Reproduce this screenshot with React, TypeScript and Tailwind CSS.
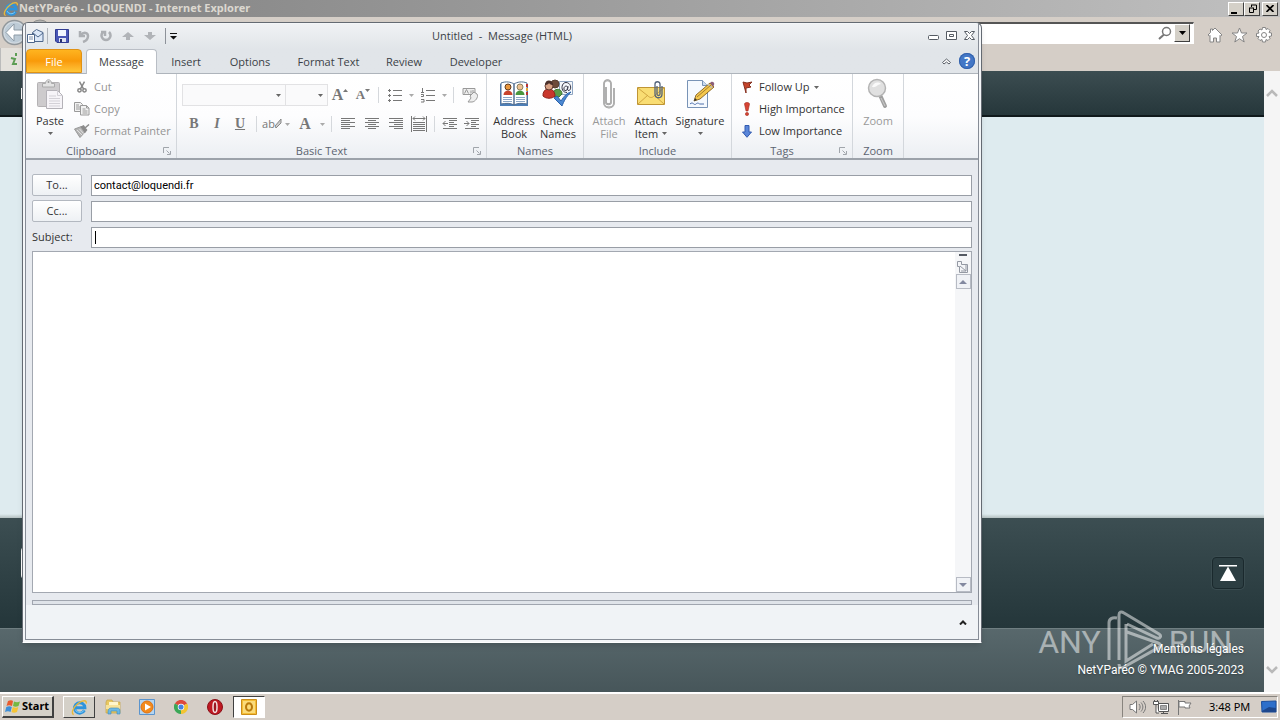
import { useId } from "react";
import type { ReactNode } from "react";

function Arrow({ className = "fill-[#666]" }: { className?: string }) {
  return (
    <svg width="5" height="3" viewBox="0 0 5 3" className={className} aria-hidden="true">
      <path d="M0 0h5L2.500 3z" />
    </svg>
  );
}

function IeLogo({ size }: { size: number }) {
  return (
    <svg width={size} height={size} viewBox="0 0 16 16" fill="none" aria-hidden="true">
      <path d="M12.600 10.600a4.900 4.900 0 1 1 .5-2.400H4" stroke="#2f94dc" strokeWidth="2.800" />
      <path d="M12 10.800A4.600 4.600 0 0 1 4 10" stroke="#7cc8f3" strokeWidth="1" />
      <path d="M2.600 14.600C-.6 13.600 2.500 7.400 7 4c4-3 8.200-3.300 7.300.3" stroke="#e9b93a" strokeWidth="1.300" />
    </svg>
  );
}

function Launcher() {
  return (
    <svg width="9" height="9" viewBox="0 0 9 9" fill="none" stroke="#a0a5ab" aria-hidden="true">
      <path d="M.5 6V.5H6M3.500 3.500l3 3M7.500 4v3.500H4" />
    </svg>
  );
}

function Group({
  label,
  width,
  launcher,
  children,
}: {
  label: string;
  width: string;
  launcher?: boolean;
  children: ReactNode;
}) {
  return (
    <section
      aria-label={label}
      className={`relative flex shrink-0 flex-col border-r border-[#d3d7dc] ${width}`}
    >
      <div className="h-[70px]">{children}</div>
      <p className={`text-center leading-[14px] text-[#5c6470] ${launcher ? "pr-5" : ""}`}>{label}</p>
      {launcher && (
        <button aria-label={`${label} options`} className="absolute right-1 bottom-[2px]">
          <Launcher />
        </button>
      )}
    </section>
  );
}

function BigButton({
  icon,
  lines,
  width,
  arrow,
  muted,
}: {
  icon: ReactNode;
  lines: string[];
  width: string;
  arrow?: boolean;
  muted?: boolean;
}) {
  return (
    <button
      className={`flex shrink-0 flex-col items-center pt-1 leading-[13px] whitespace-nowrap ${width} ${
        muted ? "text-[#999]" : "text-[#333]"
      }`}
    >
      <span className="mb-1 flex h-8 items-center">{icon}</span>
      {lines.map((line, i) => (
        <span key={line} className="flex items-center gap-1">
          {line}
          {arrow && i === 1 && <Arrow />}
        </span>
      ))}
      {arrow && lines.length === 1 && (
        <span className="flex h-3 items-center">
          <Arrow />
        </span>
      )}
    </button>
  );
}

function SmallButton({ icon, children, muted }: { icon: ReactNode; children: ReactNode; muted?: boolean }) {
  return (
    <button
      className={`flex h-[22px] items-center gap-1 whitespace-nowrap ${muted ? "text-[#949494]" : "text-[#333]"}`}
    >
      <span className="flex w-4 justify-center">{icon}</span>
      {children}
    </button>
  );
}

function Tool({ label, width = "w-6", children }: { label: string; width?: string; children: ReactNode }) {
  return (
    <button
      aria-label={label}
      className={`flex h-5 shrink-0 items-center justify-center text-[#777] ${width}`}
    >
      {children}
    </button>
  );
}

function Divider() {
  return <span className="mx-1 h-4 w-px shrink-0 bg-[#d5d8dc]" />;
}

function Lines({ d }: { d: string }) {
  return (
    <svg width="16" height="16" viewBox="0 0 16 16" fill="none" stroke="#777" aria-hidden="true">
      <path d={d} />
    </svg>
  );
}

function PasteIcon() {
  return (
    <svg width="28" height="32" viewBox="0 0 28 32" aria-hidden="true">
      <rect x="1.500" y="4.500" width="22" height="24" rx="1" fill="#cdcbcd" stroke="#b4b2b4" />
      <path d="M6.500 9V5.500h3c0-5 6-5 6 0h3V9z" fill="#e3e3e3" stroke="#aaa" />
      <circle cx="12.500" cy="4" r="1" fill="#999" />
      <path d="M10.500 12.500h11l5 5v13h-16z" fill="#f6f4f8" stroke="#b4b2b8" />
      <path d="M21.500 12.500v5h5M13 18h7M13 20.500h11M13 23h11M13 25.500h11M13 28h11" fill="none" stroke="#d3d1d7" />
    </svg>
  );
}

function CutIcon() {
  return (
    <svg width="10" height="14" viewBox="0 0 12 15" fill="none" stroke="#888" strokeWidth="1.800" aria-hidden="true">
      <path d="M3 1l5 9M9 1L4 10" />
      <circle cx="3" cy="11.500" r="2" />
      <circle cx="9" cy="11.500" r="2" />
    </svg>
  );
}

function CopyIcon() {
  return (
    <svg width="16" height="14" viewBox="0 0 16 14" fill="#f2f2f2" stroke="#9a9a9a" aria-hidden="true">
      <path d="M.5.5h6l2 2v7h-8z" />
      <path d="M6.500 3.500h6l2.500 2.500v7h-8.500zM12.500 3.500V6H15M8.500 7h3M8.500 9h5M8.500 11h5M2 3h3M2 5h4M2 7h4" />
    </svg>
  );
}

function PainterIcon() {
  return (
    <svg width="16" height="14" viewBox="0 0 16 14" aria-hidden="true">
      <path d="M.5 5l7-2.500 4 5-5.500 6z" fill="#b4b4b4" stroke="#999" />
      <path d="M3 6l5 5M5.500 5l4 4.500" stroke="#e0e0e0" />
      <path d="M7.500 3l2-1 3 4-1.500 2zM11 4l4-3.500" fill="#888" stroke="#8c8c8c" strokeWidth="1.500" />
    </svg>
  );
}

function AddressBookIcon() {
  return (
    <svg width="30" height="28" viewBox="0 0 30 28" aria-hidden="true">
      <path d="M1 4h28v22H1z" fill="#4d7fb8" />
      <path d="M2 3c5-2 10-1 13 1v21c-3-2-8-2-13-1zM28 3c-5-2-10-1-13 1v21c3-2 8-2 13-1z" fill="#fff" stroke="#526f91" />
      <path d="M27 4h2v3h-2zM27 12h2v3h-2z" fill="#b33" />
      <path d="M27 8h2v3h-2z" fill="#e6a431" />
      <path d="M4.500 15c0-6 9-6 9 0z" fill="#c8432b" />
      <path d="M16.500 15c0-6 9-6 9 0z" fill="#4a963d" />
      <circle cx="9" cy="7" r="3" fill="#e8963c" stroke="#633c20" />
      <circle cx="21" cy="7" r="3" fill="#ecc092" stroke="#8b805f" />
      <path d="M4 17.500h9M4 19.500h9M4 21.500h9M17 17.500h9M17 19.500h9M17 21.500h9" stroke="#8ba6c6" />
    </svg>
  );
}

function CheckNamesIcon() {
  return (
    <svg width="32" height="30" viewBox="0 0 32 30" aria-hidden="true">
      <path d="M17.500 2.500h13v13h-13z" fill="#f4f7fb" stroke="#8ea4c0" />
      <path d="M25.500 7.500c-4-2-5 5-1.500 4 2-.5 2-4 2-4s-2 4 1 4c3-1 2-8-3-8s-6 10 1 10" fill="none" stroke="#334" />
      <circle cx="13" cy="5" r="4" fill="#6d4a3a" stroke="#573d31" />
      <path d="M10 17c0-8 10-9 10-2l-3 3z" fill="#5b9c47" stroke="#3c7730" />
      <path d="M1 17c-1-9 12-10 12 0-3 3-9 3-12 0z" fill="#c9372c" stroke="#8d251d" />
      <circle cx="7" cy="7" r="4" fill="#d8a184" stroke="#613b31" />
      <path d="M3 6c0-7 9-5 8 0-3 0-4-2-4-2-1 2-4 2-4 2z" fill="#4b302b" />
      <path d="M12 19l3-2 4 5c3-5 6-8 10-9-5 5-7 9-9 14z" fill="#4a87d1" stroke="#2b62aa" />
    </svg>
  );
}

function ClipIcon() {
  return (
    <svg width="12" height="30" viewBox="0 0 12 30" fill="none" aria-hidden="true">
      <path d="M3 8v15c0 3 5 3 5 0V5c0-5-7-5-7 0v19c0 6 10 6 10 0V9" stroke="#979797" strokeWidth="1.800" />
      <path d="M3 8v15c0 3 5 3 5 0V5c0-5-7-5-7 0v19c0 6 10 6 10 0V9" stroke="#ddd" strokeWidth=".5" />
    </svg>
  );
}

function AttachItemIcon() {
  return (
    <svg width="28" height="27" viewBox="0 0 28 27" aria-hidden="true">
      <path d="M.5 6.500h27v17H.5z" fill="#f9dd73" stroke="#bf9534" />
      <path d="M1 23l10-9M27 23l-10-9M1 7l10 8c2 2 4 2 6 0l10-8" fill="none" stroke="#d1a641" />
      <path d="M20 5v8c0 2 3 2 3 0V3c0-3-5-3-5 0v10c0 5 7 5 7 0V5" fill="none" stroke="#53637b" strokeWidth="1.300" />
    </svg>
  );
}

function SignatureIcon() {
  return (
    <svg width="30" height="30" viewBox="0 0 30 30" aria-hidden="true">
      <path d="M2.500 1.500h15l5 5v22h-20z" fill="#f5f9fe" stroke="#7893b6" />
      <path d="M17.500 1.500v5h5" fill="#cbdcf0" stroke="#7893b6" />
      <path d="M5 25c3-3 4 2 6 0s3 0 4 0h4" fill="none" stroke="#4c6eaa" />
      <path d="M9 22l2-6L25 4l4 4-14 12z" fill="#f4c84e" stroke="#8f6c2b" />
      <path d="M25 4l1-1c2-1 4 1 3 3l-1 2z" fill="#8d5f79" />
      <path d="M23 5l4 4" stroke="#bbb" strokeWidth="1.500" />
      <path d="M12 18L26 6" stroke="#a57e2d" />
      <path d="M9 22l1-3 2 2z" fill="#333" />
    </svg>
  );
}

function MagnifierIcon() {
  return (
    <svg width="22" height="32" viewBox="0 0 22 32" aria-hidden="true">
      <path d="M13 17l5 11" stroke="#9f9f9f" strokeWidth="4" strokeLinecap="round" />
      <path d="M14 20l4 8" stroke="#ccc" />
      <circle cx="10" cy="10" r="8.500" fill="#e0e0e0" stroke="#b4b4b4" strokeWidth="1.500" />
      <path d="M5 9c1-4 6-6 9-3-3 0-5 4-9 3z" fill="#fafafa" />
    </svg>
  );
}

function QuickAccess() {
  return (
    <div className="flex h-full items-center">
      <svg width="17" height="16" viewBox="0 0 17 16" className="ml-px" aria-label="Message window" role="img">
        <path d="M5.500 4.500l4-3 6.500 3v9H5.500z" fill="#dce8f8" stroke="#4e678b" />
        <path d="M6 5l5 4 5-4" fill="none" stroke="#4e678b" />
        <path d="M.5 6.500h7v8h-7z" fill="#fff" stroke="#4e678b" />
        <path d="M2 9h4M2 11h4" stroke="#7c8fab" />
      </svg>
      <span className="mx-[3px] h-4 w-px bg-[#b1b5bb]" />
      <button aria-label="Save" className="flex w-[22px] justify-center">
        <svg width="14" height="14" viewBox="0 0 14 14">
          <path d="M.5.5h13v13H2L.5 12z" fill="#4a57b6" stroke="#313c91" />
          <path d="M3 1h8v6H3z" fill="#f2f6ff" />
          <path d="M4 9h7v4H4z" fill="#dfe4f2" />
          <path d="M5 10h2v3H5z" fill="#27306f" />
        </svg>
      </button>
      <button aria-label="Undo" className="flex w-[22px] justify-center">
        <svg width="12" height="13" viewBox="0 0 12 13" fill="none" stroke="#acafb3" strokeWidth="2.500">
          <path d="M2 1v5h5M2.500 5.500C6 1 10 3 10 6c0 3-2 5-5 6" />
        </svg>
      </button>
      <button aria-label="Redo" className="flex w-[22px] justify-center">
        <svg width="12" height="12" viewBox="0 0 12 12" fill="none" stroke="#acafb3" strokeWidth="2.500">
          <path d="M3 2c-3 3-1 8 3 8s6-5 3-8M1 2h4v4" />
        </svg>
      </button>
      <button aria-label="Previous" className="flex w-[22px] justify-center">
        <svg width="12" height="10" viewBox="0 0 12 10" fill="#b1b4b8">
          <path d="M6 1l6 5H8v3H4V6H0z" />
        </svg>
      </button>
      <button aria-label="Next" className="flex w-[22px] justify-center">
        <svg width="12" height="10" viewBox="0 0 12 10" fill="#b1b4b8">
          <path d="M6 9l6-5H8V1H4v3H0z" />
        </svg>
      </button>
      <span className="mx-1 h-4 w-px bg-[#8d9299]" />
      <button aria-label="Customize toolbar">
        <svg width="7" height="7" viewBox="0 0 7 7">
          <path d="M0 0h7v1H0zM0 3h7L3.500 6.500z" fill="#111" />
        </svg>
      </button>
    </div>
  );
}

const tabs = [
  { name: "Insert", width: "w-[58px]" },
  { name: "Options", width: "w-[70px]" },
  { name: "Format Text", width: "w-[87px]" },
  { name: "Review", width: "w-16" },
  { name: "Developer", width: "w-20" },
];

function Tabs() {
  return (
    <nav className="flex h-[26px] shrink-0 items-end border-b border-[#aeb4bb] text-[#3b3f46]">
      <button className="h-6 w-14 rounded-t-sm border border-[#e09214] bg-linear-to-b from-[#ffb41f] via-[#f99a08] to-[#ffc637] pt-[2px] text-white">
        File
      </button>
      <button className="-mb-px ml-1 h-[25px] w-[71px] rounded-t-sm border border-b-0 border-[#b9bec5] bg-white">
        Message
      </button>
      {tabs.map((tab) => (
        <button key={tab.name} className={`h-6 shrink-0 pt-[2px] ${tab.width}`}>
          {tab.name}
        </button>
      ))}
      <div className="mr-[3px] ml-auto flex h-6 items-center gap-2">
        <button aria-label="Minimize the ribbon">
          <svg width="9" height="7" viewBox="0 0 9 7" fill="#fff" stroke="#5b6068">
            <path d="M4.500 1l4 3.500-1.500 1.500-2.500-2-2.500 2L.5 4.500z" />
          </svg>
        </button>
        <button
          aria-label="Help"
          className="size-4 rounded-full bg-[#4377c6] text-[13px] leading-4 font-bold text-white ring-1 ring-[#3261ab] ring-inset"
        >
          ?
        </button>
      </div>
    </nav>
  );
}

function BasicText() {
  return (
    <div className="flex h-full flex-col gap-[9px] pt-[11px] pl-[5px]">
      <div className="flex h-5 items-center">
        <div className="relative h-[22px] w-[104px] shrink-0 border border-[#e2e2e4] bg-[#fafafb]">
          <select aria-label="Font" className="size-full appearance-none" />
          <span className="pointer-events-none absolute top-[9px] right-1">
            <Arrow />
          </span>
        </div>
        <div className="relative h-[22px] w-[42px] shrink-0 border border-l-0 border-[#e2e2e4] bg-[#fafafb]">
          <select aria-label="Font size" className="size-full appearance-none" />
          <span className="pointer-events-none absolute top-[9px] right-1">
            <Arrow />
          </span>
        </div>
        <Tool label="Grow font">
          <span className="font-['Liberation_Serif'] text-base font-bold">A</span>
          <svg width="5" height="14" viewBox="0 0 5 14" fill="#777"><path d="M0 4h5L2.500 1z" /></svg>
        </Tool>
        <Tool label="Shrink font" width="w-[22px]">
          <span className="font-['Liberation_Serif'] text-[13px] font-bold">A</span>
          <svg width="5" height="14" viewBox="0 0 5 14" fill="#777"><path d="M0 1h5L2.500 4z" /></svg>
        </Tool>
        <Divider />
        <Tool label="Bullets">
          <Lines d="M1 3.500h3M6 3.500h9M1 8.500h3M6 8.500h9M1 13.500h3M6 13.500h9M2.500 2v3M2.500 7v3M2.500 12v3" />
        </Tool>
        <Tool label="Bullet styles" width="w-[9px]"><Arrow className="fill-[#aaa]" /></Tool>
        <Tool label="Numbering">
          <Lines d="M2.500 1v4M1 5.500h3M1 7.500h2.500v2H1M1 12.500h3v2.500H1M6 3.500h9M6 8.500h9M6 13.500h9" />
        </Tool>
        <Tool label="Number styles" width="w-[9px]"><Arrow className="fill-[#aaa]" /></Tool>
        <Divider />
        <Tool label="Clear formatting">
          <svg width="17" height="17" viewBox="0 0 17 17" fill="#eee" stroke="#999">
            <path d="M1 1.500h12v6H1z" />
            <path d="M2.500 6.500l2-4 2 4M9 3.500v3M11 3v3.500" />
            <path d="M8 9l4-4 3 2c2 3-2 8-5 8H6l3-4z" />
          </svg>
        </Tool>
      </div>
      <div className="flex h-5 items-center font-['Liberation_Serif'] text-sm font-bold">
        <Tool label="Bold">B</Tool>
        <Tool label="Italic" width="w-[22px]"><i>I</i></Tool>
        <Tool label="Underline"><u>U</u></Tool>
        <Divider />
        <Tool label="Highlight" width="w-[22px]">
          <span className="font-['Open_Sans'] text-[11px] font-normal">ab</span>
          <svg width="7" height="14" viewBox="0 0 7 14" fill="#ccc" stroke="#888"><path d="M6 2v4L1 11l-1-2z" /></svg>
        </Tool>
        <Tool label="Highlight color" width="w-[9px]"><Arrow className="fill-[#aaa]" /></Tool>
        <Tool label="Font color" width="w-[26px]"><span className="text-base">A</span></Tool>
        <Tool label="Font colors" width="w-[9px]"><Arrow className="fill-[#aaa]" /></Tool>
        <Divider />
        <Tool label="Align left">
          <Lines d="M1 2.500h14M1 4.500h9M1 6.500h14M1 8.500h9M1 10.500h14M1 12.500h9" />
        </Tool>
        <Tool label="Center">
          <Lines d="M1 2.500h14M4 4.500h8M1 6.500h14M4 8.500h8M1 10.500h14M4 12.500h8" />
        </Tool>
        <Tool label="Align right">
          <Lines d="M1 2.500h14M6 4.500h9M1 6.500h14M6 8.500h9M1 10.500h14M6 12.500h9" />
        </Tool>
        <Tool label="Distribute" width="w-[22px]">
          <Lines d="M.5 0v16M15.500 0v16M2 2.500h12M4 .5l-2 2 2 2M12 .5l2 2-2 2M2 6.500h12M2 8.500h12M2 10.500h12M2 12.500h12M2 14.500h12" />
        </Tool>
        <Divider />
        <Tool label="Decrease indent" width="w-[22px]">
          <Lines d="M1 2.500h14M7 4.500h8M7 6.500h5M7 8.500h8M7 10.500h5M1 12.500h14M1 7.500h5M3.500 5l-2.500 2.500 2.500 2.500" />
        </Tool>
        <Tool label="Increase indent" width="w-[22px]">
          <Lines d="M1 2.500h14M7 4.500h8M7 6.500h5M7 8.500h8M7 10.500h5M1 12.500h14M0 7.500h5M2.500 5l2.500 2.500-2.500 2.500" />
        </Tool>
      </div>
    </div>
  );
}

function Ribbon() {
  return (
    <div className="flex h-[86px] shrink-0 border-b-2 border-[#9ca2aa] bg-linear-to-b from-white via-[#fdfdfe] to-[#eceff3]">
      <Group label="Clipboard" width="w-[151px]" launcher>
        <div className="flex">
          <BigButton icon={<PasteIcon />} lines={["Paste"]} width="w-12" arrow />
          <div className="pt-[2px]">
            <SmallButton muted icon={<CutIcon />}>Cut</SmallButton>
            <SmallButton muted icon={<CopyIcon />}>Copy</SmallButton>
            <SmallButton muted icon={<PainterIcon />}>Format Painter</SmallButton>
          </div>
        </div>
      </Group>
      <Group label="Basic Text" width="w-[310px]" launcher>
        <BasicText />
      </Group>
      <Group label="Names" width="w-[97px]">
        <div className="flex pl-1">
          <BigButton icon={<AddressBookIcon />} lines={["Address", "Book"]} width="w-[46px]" />
          <BigButton icon={<CheckNamesIcon />} lines={["Check", "Names"]} width="w-[42px]" />
        </div>
      </Group>
      <Group label="Include" width="w-[148px]">
        <div className="flex pl-1">
          <BigButton muted icon={<ClipIcon />} lines={["Attach", "File"]} width="w-[42px]" />
          <BigButton icon={<AttachItemIcon />} lines={["Attach", "Item"]} width="w-[42px]" arrow />
          <BigButton icon={<SignatureIcon />} lines={["Signature"]} width="w-14" arrow />
        </div>
      </Group>
      <Group label="Tags" width="w-[121px]" launcher>
        <div className="pt-[2px] pl-[7px]">
          <SmallButton
            icon={
              <svg width="11" height="12" viewBox="0 0 11 12">
                <path d="M1 1l4 1 5-1-3 3 2 2-5 1v5z" fill="#c5442b" stroke="#85301f" />
              </svg>
            }
          >
            Follow Up <Arrow />
          </SmallButton>
          <SmallButton
            icon={
              <svg width="6" height="14" viewBox="0 0 6 14" fill="#d64534" stroke="#a52c20" strokeWidth=".6">
                <path d="M.5 2c0-2 5-2 5 0L4 9H2z" />
                <circle cx="3" cy="12" r="1.600" />
              </svg>
            }
          >
            High Importance
          </SmallButton>
          <SmallButton
            icon={
              <svg width="10" height="13" viewBox="0 0 10 13" fill="#5a86d9" stroke="#335bb0">
                <path d="M3 .5h4V7h2.500L5 12.300.5 7H3z" />
              </svg>
            }
          >
            Low Importance
          </SmallButton>
        </div>
      </Group>
      <Group label="Zoom" width="w-[51px]">
        <BigButton muted icon={<MagnifierIcon />} lines={["Zoom"]} width="w-[50px]" />
      </Group>
    </div>
  );
}

const fieldButton =
  "h-[22px] w-[50px] shrink-0 rounded-xs border border-[#b3b8c0] bg-linear-to-b from-white to-[#eef1f4] text-[#333]";
const fieldInput =
  "h-[21px] min-w-0 flex-1 border border-[#999ea6] bg-white px-[2px] font-['Roboto'] text-[11px] text-black outline-none";

function Compose() {
  const id = useId();
  return (
    <div className="flex min-h-0 flex-1 flex-col bg-[#e7eaef] px-[6px] pt-[14px]">
      <form className="flex shrink-0 flex-col gap-1 text-[#333]">
        <div className="flex items-center gap-[9px]">
          <button type="button" className={fieldButton}>To...</button>
          <input aria-label="To" className={fieldInput} defaultValue="contact@loquendi.fr" />
        </div>
        <div className="flex items-center gap-[9px]">
          <button type="button" className={fieldButton}>Cc...</button>
          <input aria-label="Cc" className={fieldInput} />
        </div>
        <div className="relative flex h-[22px] items-center gap-[9px]">
          <label htmlFor={`${id}-subject`} className="w-[50px]">Subject:</label>
          <input id={`${id}-subject`} className={fieldInput} />
          <span className="absolute left-[63px] h-[13px] w-px bg-black" />
        </div>
      </form>
      <div className="mt-[3px] flex min-h-0 flex-1 border border-[#a3a8b1] bg-white">
        <textarea aria-label="Message body" className="min-w-0 flex-1 resize-none p-2 outline-none" />
        <div className="flex w-4 flex-col items-center justify-between bg-[#f5f6f8]">
          <div className="flex flex-col items-center">
            <span className="mt-[2px] h-[2px] w-2 bg-[#555a63]" />
            <button aria-label="Toggle ruler" className="mt-[3px] flex h-[15px] items-center">
              <svg width="12" height="12" viewBox="0 0 12 12" fill="#f4f5f8" stroke="#9499a3">
                <path d="M.5.5h4v3h6v8h-8v-6h-2zM3 5l6 5M9 4v6H4" />
              </svg>
            </button>
            <button
              aria-label="Scroll up"
              className="flex h-[15px] w-[15px] items-center justify-center border border-[#b7bbc4] bg-[#f0f2f6]"
            >
              <svg width="8" height="4" viewBox="0 0 8 4" fill="#8389a0"><path d="M4 0l4 4H0z" /></svg>
            </button>
          </div>
          <button
            aria-label="Scroll down"
            className="flex h-[15px] w-[15px] items-center justify-center border border-[#b7bbc4] bg-[#f0f2f6]"
          >
            <svg width="8" height="4" viewBox="0 0 8 4" fill="#8389a0"><path d="M0 0h8L4 4z" /></svg>
          </button>
        </div>
      </div>
      <div className="mt-[7px] h-[5px] shrink-0 border border-[#a0a5af] bg-[#dfe3e9]" />
      <div className="-mx-[6px] flex h-[34px] shrink-0 items-center justify-end bg-[#f0f3f6] pr-[11px]">
        <button aria-label="Expand people pane">
          <svg width="8" height="5" viewBox="0 0 8 5" fill="none" stroke="#222" strokeWidth="2">
            <path d="M1 4.500l3-3 3 3" />
          </svg>
        </button>
      </div>
    </div>
  );
}

function MessageWindow() {
  return (
    <div className="absolute top-[22px] bottom-[77px] left-[22px] z-10 flex w-3/4 flex-col overflow-hidden rounded-t-md border border-[#646a72] border-b-white bg-[#f4f6f8] px-[2px] pt-px pb-[2px] font-['Open_Sans'] text-[11px] shadow-md">
      <div className="flex min-h-0 flex-1 flex-col border-x border-b border-[#868c96] bg-linear-to-b from-[#f0f2f4] via-[#e1e5e9] to-[#e1e5e9] bg-[length:100%_50px]">
        <header className="grid h-6 shrink-0 grid-cols-[1fr_auto_1fr] items-center">
          <QuickAccess />
          <h1 className="whitespace-pre text-[#3a3e45]">Untitled  -  Message (HTML)</h1>
          <div className="flex items-center justify-end gap-[7px] pr-[3px]">
            <button aria-label="Minimize">
              <svg width="11" height="11" viewBox="0 0 11 11" fill="#fff" stroke="#555b63"><rect x=".5" y="4.500" width="10" height="4" rx="1" /></svg>
            </button>
            <button aria-label="Maximize">
              <svg width="11" height="11" viewBox="0 0 11 11" fill="#fff" stroke="#555b63"><path d="M.5.5h10v8H.5zM3.500 3.500h4v2h-4z" /></svg>
            </button>
            <button aria-label="Close">
              <svg width="11" height="11" viewBox="0 0 11 11" fill="#fff" stroke="#555b63"><path d="M.5.5h3l2 2 2-2h3l-3 4 3 4h-3l-2-2-2 2h-3l3-4z" /></svg>
            </button>
          </div>
        </header>
        <Tabs />
        <Ribbon />
        <Compose />
      </div>
    </div>
  );
}

const bevel = "border border-t-white border-l-white border-r-[#404040] border-b-[#404040] bg-[#d4d0c8]";

function BrowserBars() {
  return (
    <>
      <header className="flex h-[17px] shrink-0 items-center bg-linear-to-r from-[#808080] to-[#c0c0c0] pr-[2px] pl-[3px] font-['Noto_Sans']">
        <IeLogo size={16} />
        <h2 className="flex-1 text-[11px] font-bold text-[#dcd8d0]">NetYParéo - LOQUENDI - Internet Explorer</h2>
        <button aria-label="Minimize browser" className={`flex h-[14px] w-4 items-end justify-center ${bevel}`}>
          <span className="mr-1 mb-px h-[2px] w-[6px] bg-black" />
        </button>
        <button aria-label="Restore browser" className={`flex h-[14px] w-4 items-center justify-center ${bevel}`}>
          <svg width="9" height="9" viewBox="0 0 9 9" fill="none" stroke="#000"><path d="M3 1h5.500M3.500 1v2M8.500 1v4.500H6M1 4h5M1.500 4v4.500h4V4" /></svg>
        </button>
        <button aria-label="Close browser" className={`ml-[2px] flex h-[14px] w-4 items-center justify-center ${bevel}`}>
          <svg width="8" height="7" viewBox="0 0 8 7" stroke="#000" strokeWidth="1.700"><path d="M.5 0l7 7M7.500 0l-7 7" /></svg>
        </button>
      </header>
      <div className="flex h-[54px] shrink-0 flex-col bg-[#d5cec7]">
        <div className="flex h-[31px] items-center pr-2">
          <button aria-label="Back" className="ml-px shrink-0">
            <svg width="27" height="27" viewBox="0 0 27 27">
              <circle cx="13.500" cy="13.500" r="12" fill="#d1dae1" stroke="#91979b" strokeWidth="1.500" />
              <circle cx="13.500" cy="13.500" r="10" fill="#bdcbd6" />
              <path d="M13 5l-8 8.500 8 8.500v-6h9v-5h-9z" fill="#fff" stroke="#8d9ba6" />
            </svg>
          </button>
          <button aria-label="Forward" className="mb-1 shrink-0">
            <svg width="24" height="24" viewBox="0 0 24 24"><circle cx="12" cy="12" r="11" fill="#b4b4b2" stroke="#8e8e8c" /></svg>
          </button>
          <div className="ml-2 flex h-[22px] flex-1 items-center border border-t-2 border-[#555] border-r-white border-b-white bg-white pr-[3px]">
            <input aria-label="Address" className="min-w-0 flex-1 outline-none" />
            <button aria-label="Search">
              <svg width="14" height="14" viewBox="0 0 14 14" fill="none" stroke="#777" strokeWidth="1.500"><circle cx="8.500" cy="5.500" r="4" /><path d="M6 8.500L1 13" strokeWidth="2" /></svg>
            </button>
            <button aria-label="Search options" className={`ml-[2px] flex h-[18px] w-4 items-center justify-center ${bevel}`}>
              <svg width="7" height="4" viewBox="0 0 7 4"><path d="M0 0h7L3.500 4z" /></svg>
            </button>
          </div>
          <div className="ml-[13px] flex items-center gap-2 pt-1">
            <button aria-label="Home">
              <svg width="16" height="16" viewBox="0 0 16 16" fill="#fff" stroke="#858585"><path d="M8 1l7 7-1.500 1-.5-.5v6.500h-3.500v-4h-3v4H3V8.500l-.5.5L1 8l2.500-2.500V2h2v1.500z" /></svg>
            </button>
            <button aria-label="Favorites">
              <svg width="17" height="16" viewBox="0 0 17 16" fill="#fff" stroke="#858585"><path d="M8.500 1l2 5h5.500l-4.500 3.500 1.700 5.500-4.700-3.300L3.800 15l1.700-5.500L1 6h5.500z" /></svg>
            </button>
            <button aria-label="Tools">
              <svg width="16" height="16" viewBox="0 0 16 16" fill="#fff" stroke="#858585"><path d="M6.500.5h3l.5 2 2-1 2 2-1 2 2.500.5v3l-2.500.5 1 2-2 2-2-1-.5 2.500h-3l-.5-2.500-2 1-2-2 1-2L.5 9.500v-3L3 6 2 4l2-2 2 1z" /><circle cx="8" cy="8" r="2.500" /></svg>
            </button>
          </div>
        </div>
        <button aria-label="NetYParéo tab" className="flex h-[23px] w-40 items-center border-l border-[#bbb] bg-[#e4e1dc] pl-[9px]">
          <svg width="8" height="13" viewBox="0 0 8 13" fill="none" stroke="#5d9d55" strokeWidth="2"><path d="M6 0v3M1 5l4 1-2 5h4" /></svg>
        </button>
      </div>
    </>
  );
}

function WebPage() {
  return (
    <div className="flex min-h-0 flex-1">
      <main className="relative flex min-w-0 flex-1 flex-col bg-[#deebef] font-['Roboto']">
        <div className="flex h-[46px] shrink-0 items-center border-b-2 border-[#10191c] bg-linear-to-b from-[#3c4d51] to-[#26373b] pl-[21px]">
          <span className="h-[11px] w-10 bg-white" />
        </div>
        <div className="flex-1" />
        <div className="h-1 shrink-0 bg-linear-to-b from-[#deebef] to-[#b4c0c0]" />
        <footer className="shrink-0 text-white">
          <div className="flex h-[110px] items-center justify-between bg-linear-to-b from-[#3c4e52] to-[#24363a] pr-5 pl-[21px]">
            <span className="mb-5 h-8 w-10 rounded-sm bg-white" />
            <button aria-label="Back to top" className="flex size-8 items-center justify-center rounded-sm border border-[#1a292d] bg-[#2c3e42] ring-1 ring-[#3a4c50]">
              <svg width="18" height="16" viewBox="0 0 18 16" fill="#fff"><path d="M0 0h18v1.500H0zM9 1.500L17 16H1z" /></svg>
            </button>
          </div>
          <div className="flex h-16 flex-col items-end border-t border-[#6f7e81] bg-linear-to-b from-[#58686c] to-[#47565a] pt-[10px] pr-5 text-xs leading-[21px] text-shadow-md">
            <a href="#mentions" className="relative z-1">Mentions légales</a>
            <p className="relative z-1">NetYParéo © YMAG 2005-2023</p>
          </div>
        </footer>
        <div className="absolute right-8 bottom-[22px] flex h-[60px] items-center gap-[6px] text-[32px] leading-none text-white/50">
          <span className="pt-1">ANY</span>
          <svg width="56" height="60" viewBox="0 0 56 60" fill="none" stroke="currentColor" strokeWidth="3">
            <path d="M10 8c-5-1-8 1-8 5v37" />
            <path d="M12 50V5c0-3 2-4 5-2l35 21c3 2 1 5-2 4L20 14" />
            <path d="M19 14v37l27-17M20 22l31 11c3 1 3 4 0 5L17 57c-3 2-5 0-5-3" />
          </svg>
          <span className="pt-1">RUN</span>
        </div>
      </main>
      <div className="flex w-4 shrink-0 flex-col items-center justify-between bg-[#f5f5f5] py-[18px]">
        <button aria-label="Page up">
          <svg width="12" height="8" viewBox="0 0 12 8" fill="none" stroke="#b9b9b9" strokeWidth="2.500"><path d="M1 7l5-5 5 5" /></svg>
        </button>
        <button aria-label="Page down">
          <svg width="12" height="8" viewBox="0 0 12 8" fill="none" stroke="#b9b9b9" strokeWidth="2.500"><path d="M1 1l5 5 5-5" /></svg>
        </button>
      </div>
    </div>
  );
}

function Taskbar() {
  return (
    <footer className="flex h-7 shrink-0 items-center border-t-2 border-white bg-[#d5cec7] pr-[2px] pl-[2px] font-['Noto_Sans'] text-[11px] text-black">
      <button className={`flex h-[22px] w-[52px] items-center gap-px border-r-2 border-b-2 pl-[2px] font-bold ${bevel}`}>
        <svg width="16" height="15" viewBox="0 0 16 15" aria-hidden="true">
          <path d="M3 2c2-1 4-1 5 0L7 7c-2-1-4-1-5.500 0z" fill="#e85b2e" />
          <path d="M9 2.500c2 1 4 1 6 0L13.500 7c-2 1-4 1-5.500 0z" fill="#74b843" />
          <path d="M1.300 8c2-1 4-1 5.500 0l-1.300 5C4 12 2 12 0 13z" fill="#3d8ed8" />
          <path d="M7.800 8c2 1 4 1 5.500 0L12 13c-2 1-4 1-5.500 0z" fill="#f5c435" />
        </svg>
        Start
      </button>
      <button aria-label="Internet Explorer" className={`ml-[9px] flex h-[22px] w-8 items-center justify-center ${bevel}`}>
        <IeLogo size={17} />
      </button>
      <button aria-label="Explorer" className="ml-[1px] flex w-[34px] justify-center">
        <svg width="17" height="16" viewBox="0 0 17 16">
          <path d="M1 3l1-2h5l1 2h7v11H1z" fill="#e8c861" stroke="#c6a548" strokeWidth=".7" />
          <path d="M4 3h9v5H4z" fill="#fff6cc" />
          <path d="M1 6h14v4H1z" fill="#f6e29a" />
          <path d="M3 15v-3c0-2 2-3 3-3h6c2 0 3 1 3 3v3h-3v-3H6v3z" fill="#6cb8e4" stroke="#3c8ab9" strokeWidth=".6" />
        </svg>
      </button>
      <button aria-label="Media Player" className="flex w-[34px] justify-center">
        <svg width="16" height="16" viewBox="0 0 16 16">
          <path d="M.5.5h15v15H.5z" fill="#b4d5f1" stroke="#5b94cd" />
          <circle cx="8" cy="8" r="6" fill="#f28a1d" stroke="#df7111" />
          <path d="M6 4.500v7l6-3.500z" fill="#fff" />
        </svg>
      </button>
      <button aria-label="Chrome" className="flex w-[34px] justify-center">
        <svg width="14" height="14" viewBox="0 0 16 16">
          <path d="M8 8L1 4a8 8 0 0 1 14 0z" fill="#dd493c" />
          <path d="M8 8l7-4a8 8 0 0 1-7 12z" fill="#f3c431" />
          <path d="M8 8v8A8 8 0 0 1 1 4z" fill="#3ba757" />
          <circle cx="8" cy="8" r="3.700" fill="#fff" />
          <circle cx="8" cy="8" r="2.900" fill="#4682e0" />
        </svg>
      </button>
      <button aria-label="Opera" className="flex w-[34px] justify-center">
        <svg width="16" height="16" viewBox="0 0 16 16">
          <circle cx="8" cy="8" r="7.500" fill="#bf1822" stroke="#8b1018" />
          <ellipse cx="8" cy="8" rx="2" ry="5.500" fill="#9c1520" stroke="#f3dfdf" strokeWidth="1.500" />
        </svg>
      </button>
      <button
        aria-label="Outlook"
        className="ml-[1px] flex h-[22px] w-8 items-center justify-center border border-[#404040] border-r-white border-b-white bg-white"
      >
        <svg width="16" height="16" viewBox="0 0 16 16">
          <path d="M.5.5h15v15H.5z" fill="#f4bd36" stroke="#cc8d18" />
          <path d="M2 2h12v12H2z" fill="#fbdb7a" />
          <ellipse cx="8" cy="8" rx="3" ry="3.700" fill="none" stroke="#b97a0d" strokeWidth="2" />
        </svg>
      </button>
      <div className="ml-auto flex h-[22px] w-[156px] items-center border border-[#88847e] border-r-white border-b-white pl-[6px]">
        <svg width="17" height="14" viewBox="0 0 17 14" fill="#fff" stroke="#777" aria-label="Volume" role="img">
          <path d="M1 4.500h2.500l4-3.500v12l-4-3.500H1z" />
          <path d="M10 4c1.500 2 1.500 4 0 6M12 2.500c2.500 3 2.500 6 0 9M14 1c3.500 4 3.500 8 0 12" fill="none" />
        </svg>
        <svg width="16" height="15" viewBox="0 0 16 15" className="ml-[7px]" fill="#fff" stroke="#555" aria-label="Network" role="img">
          <path d="M5.500 3.500h10v8h-10z" />
          <path d="M7.500 5.500h6v4h-6z" fill="#aaa" stroke="#888" />
          <path d="M8 13.500h7M10.500 12v2M.5 1.500h5v3h-5zM1.500 0v1M4.500 0v1M3 5v8h3" />
        </svg>
        <svg width="16" height="15" viewBox="0 0 16 15" className="ml-2" fill="#fff" stroke="#777" aria-label="Action center" role="img">
          <path d="M1.500 0v15M2 1.500h6v1.500h6l-2 3 1 2H8V7H2z" />
        </svg>
        <time className="mr-auto ml-4 whitespace-nowrap">3:48 PM</time>
        <svg width="16" height="14" viewBox="0 0 16 14" className="shrink-0" aria-label="Desktop" role="img">
          <path d="M.5 1.500L15 1v11H1z" fill="#2d6fcb" stroke="#1a4d9c" />
          <path d="M1 11l7-4 7 1v4H1z" fill="#1d478d" />
        </svg>
      </div>
    </footer>
  );
}

export default function App() {
  return (
    <div className="relative flex h-screen flex-col overflow-hidden bg-[#d5cec7]">
      <BrowserBars />
      <WebPage />
      <Taskbar />
      <MessageWindow />
    </div>
  );
}
